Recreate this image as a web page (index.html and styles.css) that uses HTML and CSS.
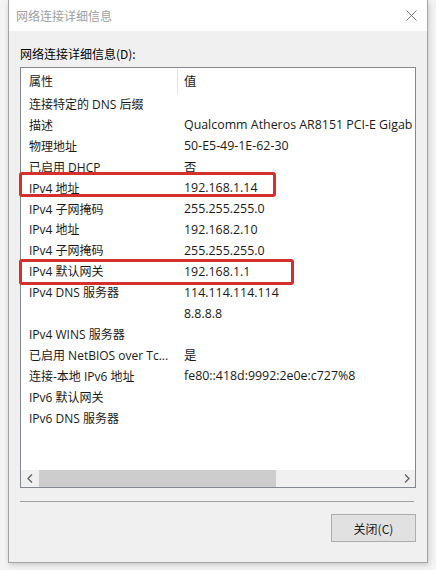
FILE: index.html
```html
<!DOCTYPE html>
<html lang="zh-CN">
<head>
<meta charset="utf-8">
<title>网络连接详细信息</title>
<link rel="stylesheet" href="styles.css">
</head>
<body>
<div class="dialog">
  <div class="titlebar">
    <span class="title">网络连接详细信息</span>
    <svg class="close" width="11" height="11" viewBox="0 0 11 11"><path d="M0.5 0.5 L10.5 10.5 M10.5 0.5 L0.5 10.5" stroke="#7a7a7a" stroke-width="1" fill="none"/></svg>
  </div>
  <div class="content">
    <div class="label">网络连接详细信息(D):</div>
    <div class="listbox">
      <div class="list-inner">
        <div class="row header"><div class="c1">属性</div><div class="c2">值</div></div>
        <div class="rows">
          <div class="row"><div class="c1">连接特定的 DNS 后缀</div><div class="c2"></div></div>
          <div class="row"><div class="c1">描述</div><div class="c2">Qualcomm Atheros AR8151 PCI-E Gigab</div></div>
          <div class="row"><div class="c1">物理地址</div><div class="c2">50-E5-49-1E-62-30</div></div>
          <div class="row"><div class="c1">已启用 DHCP</div><div class="c2">否</div></div>
          <div class="row"><div class="c1">IPv4 地址</div><div class="c2">192.168.1.14</div></div>
          <div class="row"><div class="c1">IPv4 子网掩码</div><div class="c2">255.255.255.0</div></div>
          <div class="row"><div class="c1">IPv4 地址</div><div class="c2">192.168.2.10</div></div>
          <div class="row"><div class="c1">IPv4 子网掩码</div><div class="c2">255.255.255.0</div></div>
          <div class="row"><div class="c1">IPv4 默认网关</div><div class="c2">192.168.1.1</div></div>
          <div class="row"><div class="c1">IPv4 DNS 服务器</div><div class="c2">114.114.114.114</div></div>
          <div class="row"><div class="c1"></div><div class="c2">8.8.8.8</div></div>
          <div class="row"><div class="c1">IPv4 WINS 服务器</div><div class="c2"></div></div>
          <div class="row"><div class="c1">已启用 NetBIOS over Tc...</div><div class="c2">是</div></div>
          <div class="row"><div class="c1">连接-本地 IPv6 地址</div><div class="c2">fe80::418d:9992:2e0e:c727%8</div></div>
          <div class="row"><div class="c1">IPv6 默认网关</div><div class="c2"></div></div>
          <div class="row"><div class="c1">IPv6 DNS 服务器</div><div class="c2"></div></div>
        </div>
        <div class="hscroll">
          <div class="arrow"><svg width="6" height="9" viewBox="0 0 6 9"><path d="M5 0.5 L1 4.5 L5 8.5" stroke="#606060" stroke-width="1.3" fill="none"/></svg></div>
          <div class="track"><div class="thumb"></div></div>
          <div class="arrow"><svg width="6" height="9" viewBox="0 0 6 9"><path d="M1 0.5 L5 4.5 L1 8.5" stroke="#606060" stroke-width="1.3" fill="none"/></svg></div>
        </div>
      </div>
      <div class="mark mark1"></div>
      <div class="mark mark2"></div>
    </div>
    <div class="sep"></div>
    <div class="actions"><button class="btn">关闭(C)</button></div>
  </div>
</div>
</body>
</html>
```

FILE: styles.css
```css
* { box-sizing: border-box; }
html, body { margin: 0; padding: 0; }
body {
  width: 436px;
  height: 570px;
  background: #f4f4f4;
  font-family: "Segoe UI", "Open Sans", "Noto Sans CJK SC", sans-serif;
  font-size: 12px;
  color: #1a1a1a;
  overflow: hidden;
}
.dialog {
  margin-left: 8px;
  width: 420px;
  height: 563px;
  border: 1px solid #a3a3a3;
  border-top: none;
  display: flex;
  flex-direction: column;
  background: #f0f0f0;
  box-shadow: 1px 2px 6px rgba(0,0,0,0.18);
}
.titlebar {
  height: 31px;
  background: #fff;
  display: flex;
  align-items: center;
  justify-content: space-between;
  padding: 0 10px 0 7px;
  flex: none;
}
.title {
  color: #a0a0a0;
  font-family: "Noto Sans CJK SC", sans-serif;
  font-size: 12px;
}
.close { display: block; }
.content {
  flex: 1;
  padding: 0 11px;
  display: flex;
  flex-direction: column;
}
.label {
  margin-top: 15px;
  height: 16px;
  line-height: 16px;
  color: #000;
  font-family: "Noto Sans CJK SC", sans-serif;
}
.listbox {
  position: relative;
  margin-top: 5px;
  height: 421px;
  border: 1px solid #828790;
  background: #fff;
}
.list-inner {
  height: 100%;
  display: flex;
  flex-direction: column;
  overflow: hidden;
}
.rows { flex: 1; }
.row {
  display: flex;
  height: 20.93px;
  align-items: center;
  white-space: nowrap;
}
.row.header { height: 25.5px; align-items: stretch; }
.row.header .c1 { border-right: 1px solid #e5e5e5; }
.c1 {
  width: 157px;
  padding-left: 8px;
  overflow: hidden;
  flex: none;
  height: 100%;
  display: flex;
  align-items: center;
}
.c2 {
  flex: 1;
  min-width: 0;
  padding-left: 6px;
  overflow: hidden;
  height: 100%;
  display: flex;
  align-items: center;
  font-size: 12.4px;
}
.hscroll {
  height: 17px;
  flex: none;
  display: flex;
  background: #f0f0f0;
}
.arrow {
  width: 17px;
  display: flex;
  align-items: center;
  justify-content: center;
}
.track { flex: 1; display: flex; padding: 0 0 0 1px; }
.thumb { width: 237px; background: #cdcdcd; }
.mark {
  position: absolute;
  left: -2px;
  border: 3px solid #d5302c;
  border-radius: 3px;
}
.mark1 { top: 104px; width: 257px; height: 25px; }
.mark2 { top: 191px; width: 275px; height: 26px; }
.sep {
  margin-top: 13px;
  margin-right: 2px;
  height: 1px;
  background: #a0a0a0;
}
.actions {
  margin-top: 12px;
  display: flex;
  justify-content: flex-end;
}
.btn {
  width: 85px;
  height: 28px;
  background: #e1e1e1;
  border: 1px solid #adadad;
  font-family: "Noto Sans CJK SC", sans-serif;
  font-size: 12px;
  color: #1a1a1a;
  padding: 0;
}
```
